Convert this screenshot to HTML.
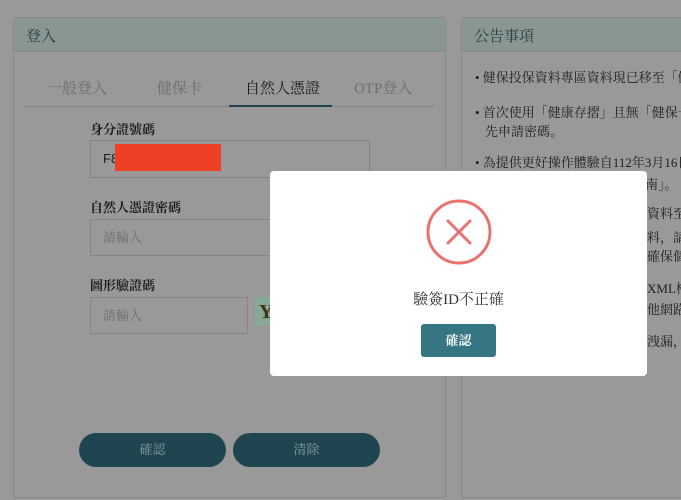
<!DOCTYPE html>
<html><head><meta charset="utf-8"><style>
*{box-sizing:border-box;margin:0;padding:0}
body{width:681px;height:500px;overflow:hidden;background:#999;font-family:"Liberation Serif","Noto Serif CJK SC",serif;position:relative}
.abs{position:absolute}
.panel{position:absolute;border:1px solid #8a8a8a;border-radius:3px;background:#999}
.hd{position:absolute;left:0;right:0;top:0;height:34px;background:#8a9692;border-bottom:1px solid #818b87;color:#1d3d44;font-size:15px;padding:7px 12px}
.tab{position:absolute;top:77px;font-size:15px;color:#6e6e6e}
.lbl{position:absolute;left:90px;font-size:13px;color:#1e1e1e;font-weight:bold}
.inp{position:absolute;left:90px;border:1px solid #858585;font-size:13px;color:#6e6e6e;padding:0 12px}
.btn{position:absolute;top:433px;height:34px;width:147px;border-radius:17px;background:#1f4650;color:#8a9da2;font-size:13px;text-align:center;line-height:34px}
.li{position:absolute;left:475px;font-size:13px;color:#1e1e1e;white-space:nowrap}
</style></head><body>
<div class="panel" style="left:13px;top:17px;width:433px;height:481px">
<div class="hd">登入</div></div>
<div class="tab" style="left:47px">一般登入</div>
<div class="tab" style="left:157px">健保卡</div>
<div class="tab" style="left:245px;color:#1a1a1a">自然人憑證</div>
<div class="tab" style="left:354px">OTP登入</div>
<div class="abs" style="left:25px;top:106px;width:409px;height:1px;background:#868686"></div>
<div class="abs" style="left:229px;top:105px;width:103px;height:2px;background:#1f4650"></div>
<div class="lbl" style="top:119px">身分證號碼</div>
<div class="inp" style="top:140px;width:280px;height:38px;line-height:36px;color:#1a1a1a;font-family:'Liberation Sans',sans-serif">F8</div>
<div class="abs" style="left:115px;top:144px;width:106px;height:27px;background:#ee4024"></div>
<div class="lbl" style="top:197px">自然人憑證密碼</div>
<div class="inp" style="top:219px;width:280px;height:37px;line-height:35px">請輸入</div>
<div class="lbl" style="top:275px">圖形驗證碼</div>
<div class="inp" style="top:297px;width:158px;height:37px;line-height:35px">請輸入</div>
<div class="abs" style="left:255px;top:297px;width:20px;height:28px;background:#84a996;color:#4a2f12;font-weight:bold;font-size:20px;padding-left:4px;line-height:30px">Y</div>
<div class="btn" style="left:79px">確認</div>
<div class="btn" style="left:233px">清除</div>

<div class="panel" style="left:461px;top:17px;width:240px;height:481px">
<div class="hd">公告事項</div></div>
<div class="li" style="top:67px">• 健保投保資料專區資料現已移至「健</div>
<div class="li" style="top:102px">• 首次使用「健康存摺」且無「健保卡</div>
<div class="li" style="top:121px;left:485px">先申請密碼。</div>
<div class="li" style="top:152px">• 為提供更好操作體驗自112年3月16日</div>
<div class="li" style="top:174px;left:645px">南」。</div>
<div class="li" style="top:203px;left:647px">資料至</div>
<div class="li" style="top:227px;left:647px">料，請</div>
<div class="li" style="top:246px;left:647px">確保個</div>
<div class="li" style="top:278px;left:647px">XML格</div>
<div class="li" style="top:299px;left:647px">他網路</div>
<div class="li" style="top:331px;left:647px">洩漏，</div>

<div class="abs" style="left:270px;top:171px;width:377px;height:205px;background:#fff;border-radius:4px"></div>
<svg class="abs" style="left:425px;top:199px" width="68" height="68" viewBox="0 0 68 68">
<circle cx="34" cy="33" r="31" fill="none" stroke="#e8736f" stroke-width="3"/>
<path d="M23 22L45 44M45 22L23 44" stroke="#e8736f" stroke-width="3" stroke-linecap="round"/></svg>
<div class="abs" style="left:270px;width:377px;top:288px;text-align:center;font-size:15px;color:#333">驗簽ID不正確</div>
<div class="abs" style="left:421px;top:324px;width:75px;height:33px;background:#367582;border-radius:3px;color:#fff;font-size:13px;text-align:center;line-height:33px;font-weight:bold">確認</div>
</body></html>
